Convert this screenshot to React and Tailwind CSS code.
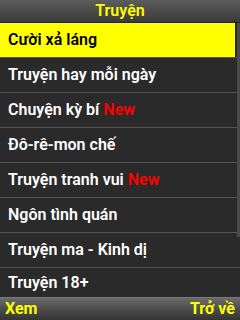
import React from "react";

const items = [
  { t: "Cười xả láng" },
  { t: "Truyện hay mỗi ngày" },
  { t: "Chuyện kỳ bí", isNew: true },
  { t: "Đô-rê-mon chế" },
  { t: "Truyện tranh vui", isNew: true },
  { t: "Ngôn tình quán" },
  { t: "Truyện ma - Kinh dị" },
  { t: "Truyện 18+" },
];

export default function App() {
  return (
    <div
      className="w-[240px] h-[320px] bg-[#2a2a2a] flex flex-col overflow-hidden relative"
      style={{ fontFamily: 'Roboto, "DejaVu Sans", sans-serif' }}
    >
      <div className="h-[23px] shrink-0 bg-gradient-to-b from-[#5c5c5c] to-[#3a3a3a] border-b border-[#252525] flex items-center justify-center">
        <span className="text-[#ffff00] text-[16px] font-semibold leading-none">Truyện</span>
      </div>
      <div className="flex-1 flex flex-col">
        {items.map((it, i) => (
          <div
            key={i}
            className={
              "shrink-0 flex " +
              (i === items.length - 1 ? "h-[29px]" : "h-[35px] border-b border-[#555555]")
            }
          >
            <div
              className={
                "w-[235px] flex items-center px-2 text-[16px] font-semibold leading-none " +
                (i === 0 ? "bg-[#ffff00] text-black" : "text-white")
              }
            >
              <span>{it.t}</span>
              {it.isNew && <span className="text-[#ff0000] ml-[4px]">New</span>}
            </div>
          </div>
        ))}
      </div>
      <div className="h-[23px] shrink-0 bg-gradient-to-b from-[#6a6a6a] to-[#333333] border-t border-[#7a7a7a] flex items-center justify-between px-[5px]">
        <span className="text-[#ffff00] text-[16px] font-bold leading-none">Xem</span>
        <span className="text-[#ffff00] text-[16px] font-bold leading-none">Trở về</span>
      </div>
      <div className="absolute right-0 top-[23px] w-[3px] h-[214px] bg-[#4a4a4a]" />
    </div>
  );
}
